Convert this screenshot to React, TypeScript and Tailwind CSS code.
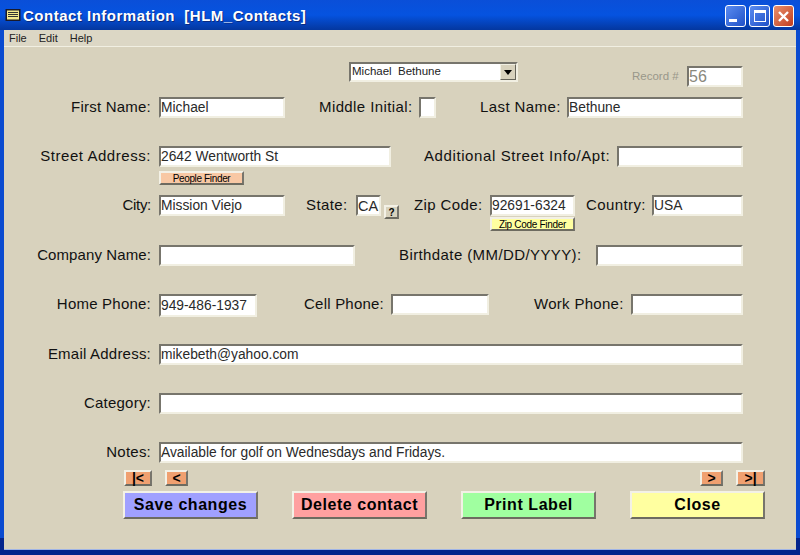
import React from "react";

const labelCls = "shrink-0 text-right text-[15px] leading-[20px] text-[#111] whitespace-nowrap";
const inputCls =
  "shrink-0 h-[21px] bg-white border-2 border-t-[#77756c] border-l-[#77756c] border-r-[#f1efe2] border-b-[#f1efe2] text-[13.8px] leading-[18px] text-[#2a2a2a] whitespace-nowrap overflow-hidden";
const raisedCls =
  "shrink-0 flex items-center justify-center border-2 border-t-[#f3f1e6] border-l-[#f3f1e6] border-r-[#77756c] border-b-[#6d6b60] text-black";

function MainBtn({ bg, ml, children }: { bg: string; ml: string; children: React.ReactNode }) {
  return <div className={`${raisedCls} ${bg} ${ml} w-[135px] h-[28px] text-[16px] font-bold tracking-[0.55px]`}>{children}</div>;
}

export default function App() {
  return (
    <div className="w-[800px] h-[555px] bg-[#0a3fc4] overflow-hidden font-['Liberation_Sans',Arial,sans-serif]">
      <div className="w-[800px] h-[555px] flex flex-col bg-gradient-to-b from-[#0a4bd0] from-[97%] to-[#03248c] to-[97%]">
        {/* Title bar */}
        <div className="h-[30px] shrink-0 flex items-center pl-[5px] pr-[6px] bg-gradient-to-b from-[#0a4fd8] via-[#0553e0] to-[#04379f]">
          <svg width="16" height="14" viewBox="0 0 16 14" className="shrink-0 mr-[2px]">
            <rect x="0.5" y="1" width="15" height="12" fill="#1a1a2a" />
            <rect x="2" y="2.5" width="12" height="9" fill="#f4e98c" />
            <path d="M3 4.5h10M3 6.5h10M3 8.5h10" stroke="#333" strokeWidth="1" />
          </svg>
          <span className="pt-[3px] text-white font-bold text-[15px] tracking-[0.5px] whitespace-pre [text-shadow:1px_1px_0_#0a2a80]">
            Contact Information  [HLM_Contacts]
          </span>
          <div className="ml-auto flex gap-[3px] pt-[2px]">
            <div className="w-[21px] h-[22px] rounded-[3px] border border-white bg-gradient-to-br from-[#5b8cf0] to-[#1f50c8] flex items-end justify-center pb-[4px] pr-[5px]">
              <div className="w-[8px] h-[3px] bg-white" />
            </div>
            <div className="w-[21px] h-[22px] rounded-[3px] border border-white bg-gradient-to-br from-[#5b8cf0] to-[#1f50c8] flex items-center justify-center">
              <div className="w-[12px] h-[12px] border border-white border-t-[3px]" />
            </div>
            <div className="w-[21px] h-[22px] rounded-[3px] border border-white bg-gradient-to-br from-[#e8906c] to-[#c03a1c] flex items-center justify-center">
              <svg width="13" height="13" viewBox="0 0 13 13">
                <path d="M2 2l9 9M11 2l-9 9" stroke="white" strokeWidth="2.4" />
              </svg>
            </div>
          </div>
        </div>
        {/* Client */}
        <div className="flex-1 min-h-0 mx-[4px] mb-[5px] bg-[#d8d2bd] flex flex-col border-b border-[#9fb4e6]">
          <div className="h-[17px] shrink-0 flex items-center pl-[5px] gap-[12px] text-[11px] text-[#222] bg-[#dcd7c5] border-b border-[#f1efe2]">
            <span>File</span>
            <span>Edit</span>
            <span>Help</span>
          </div>
          <div className="flex-1 min-h-0 pt-[15px] flex flex-col">
            {/* Selector row */}
            <div className="flex h-[35px]">
              <div className="ml-[345px] w-[169px] h-[20px] shrink-0 bg-white border-2 border-t-[#77756c] border-l-[#77756c] border-r-[#f1efe2] border-b-[#f1efe2] flex items-center justify-between pl-[1px] text-[11.5px] text-[#222]">
                <span className="whitespace-pre">Michael  Bethune</span>
                <div className="w-[16px] h-[16px] bg-[#d8d2bd] border border-t-[#f1efe2] border-l-[#f1efe2] border-r-[#66645a] border-b-[#66645a] flex items-center justify-center">
                  <svg width="8" height="5" viewBox="0 0 8 5"><path d="M0 0h8L4 5z" fill="#000" /></svg>
                </div>
              </div>
              <div className="ml-[114px] mt-[4px] w-[49px] shrink-0 text-[11.5px] leading-[21px] text-[#99978a] whitespace-nowrap">Record #</div>
              <div className={`${inputCls} ml-[6px] mt-[4px] w-[56px] !text-[16px] !text-[#8a887c]`}>56</div>
            </div>
            {/* First name row */}
            <div className="flex h-[49px]">
              <div className={`${labelCls} w-[147px] tracking-[0.22px]`}>First Name:</div>
              <div className={`${inputCls} ml-[8px] w-[126px]`}>Michael</div>
              <div className={`${labelCls} ml-[34px] w-[93px] tracking-[0.4px]`}>Middle Initial:</div>
              <div className={`${inputCls} ml-[7px] w-[17px]`} />
              <div className={`${labelCls} ml-[44px] w-[80px] tracking-[0.4px]`}>Last Name:</div>
              <div className={`${inputCls} ml-[7px] w-[176px]`}>Bethune</div>
            </div>
            {/* Street row */}
            <div className="flex h-[21px]">
              <div className={`${labelCls} w-[147px] tracking-[0.55px]`}>Street Address:</div>
              <div className={`${inputCls} ml-[8px] w-[232px]`}>2642 Wentworth St</div>
              <div className={`${labelCls} ml-[33px] w-[186px] tracking-[0.6px]`}>Additional Street Info/Apt:</div>
              <div className={`${inputCls} ml-[7px] w-[126px]`}>&nbsp;</div>
            </div>
            <div className="flex h-[28px] pt-[4px]">
              <div className={`${raisedCls} ml-[155px] w-[85px] h-[14px] bg-[#f8c8a4] text-[10px] tracking-[-0.35px] text-[#222]`}>People Finder</div>
            </div>
            {/* City row */}
            <div className="flex h-[50px]">
              <div className={`${labelCls} w-[147px] tracking-[-0.3px]`}>City:</div>
              <div className={`${inputCls} ml-[8px] w-[126px]`}>Mission Viejo</div>
              <div className={`${labelCls} ml-[21px] w-[41px] tracking-[0.4px]`}>State:</div>
              <div className={`${inputCls} ml-[9px] w-[25px] !text-[14.5px]`}>CA</div>
              <div className={`${raisedCls} ml-[3px] mt-[10px] w-[15px] h-[14px] bg-[#d8d2bd] text-[10px] font-bold text-[#333]`}>?</div>
              <div className={`${labelCls} ml-[15px] w-[68px] tracking-[0.4px]`}>Zip Code:</div>
              <div className="ml-[8px] w-[85px] shrink-0 flex flex-col gap-[1px]">
                <div className={`${inputCls} w-[85px]`}>92691-6324</div>
                <div className={`${raisedCls} w-[85px] h-[14px] bg-[#ffffa0] text-[10px] tracking-[-0.3px] text-[#222]`}>Zip Code Finder</div>
              </div>
              <div className={`${labelCls} ml-[11px] w-[58px] tracking-[0.4px]`}>Country:</div>
              <div className={`${inputCls} ml-[8px] w-[91px]`}>USA</div>
            </div>
            {/* Company */}
            <div className="flex h-[49px]">
              <div className={`${labelCls} w-[147px] tracking-[0.1px]`}>Company Name:</div>
              <div className={`${inputCls} ml-[8px] w-[196px]`} />
              <div className={`${labelCls} ml-[44px] w-[182px] tracking-[0.4px]`}>Birthdate (MM/DD/YYYY):</div>
              <div className={`${inputCls} ml-[15px] w-[147px]`} />
            </div>
            {/* Phones */}
            <div className="flex h-[50px]">
              <div className={`${labelCls} w-[147px] tracking-[0.22px]`}>Home Phone:</div>
              <div className={`${inputCls} ml-[8px] w-[98px] !h-[23px] leading-[20px]`}>949-486-1937</div>
              <div className={`${labelCls} ml-[47px] w-[80px] tracking-[0.22px]`}>Cell Phone:</div>
              <div className={`${inputCls} ml-[7px] w-[98px]`} />
              <div className={`${labelCls} ml-[45px] w-[89px] tracking-[0.3px]`}>Work Phone:</div>
              <div className={`${inputCls} ml-[8px] w-[112px]`} />
            </div>
            {/* Email */}
            <div className="flex h-[49px]">
              <div className={`${labelCls} w-[147px] tracking-[0.22px]`}>Email Address:</div>
              <div className={`${inputCls} ml-[8px] w-[584px]`}>mikebeth@yahoo.com</div>
            </div>
            <div className="flex h-[49px]">
              <div className={`${labelCls} w-[147px] tracking-[0.22px]`}>Category:</div>
              <div className={`${inputCls} ml-[8px] w-[584px]`} />
            </div>
            <div className="flex h-[28px]">
              <div className={`${labelCls} w-[147px] tracking-[0.22px]`}>Notes:</div>
              <div className={`${inputCls} ml-[8px] w-[584px]`}>Available for golf on Wednesdays and Fridays.</div>
            </div>
            {/* Nav */}
            <div className="flex h-[21px] text-[14px] font-bold">
              <div className={`${raisedCls} ml-[120px] w-[28px] h-[16px] bg-[#f0a070]`}>|&lt;</div>
              <div className={`${raisedCls} ml-[13px] w-[23px] h-[16px] bg-[#f0a070]`}>&lt;</div>
              <div className={`${raisedCls} ml-[512px] w-[23px] h-[16px] bg-[#f0a070]`}>&gt;</div>
              <div className={`${raisedCls} ml-[13px] w-[29px] h-[16px] bg-[#f0a070]`}>&gt;|</div>
            </div>
            {/* Buttons */}
            <div className="flex">
              <MainBtn bg="bg-[#a0a0ff]" ml="ml-[119px]">Save changes</MainBtn>
              <MainBtn bg="bg-[#ffa0a0]" ml="ml-[34px]">Delete contact</MainBtn>
              <MainBtn bg="bg-[#a0ffa0]" ml="ml-[34px]">Print Label</MainBtn>
              <MainBtn bg="bg-[#ffffa0]" ml="ml-[34px]">Close</MainBtn>
            </div>
          </div>
        </div>
      </div>
    </div>
  );
}
